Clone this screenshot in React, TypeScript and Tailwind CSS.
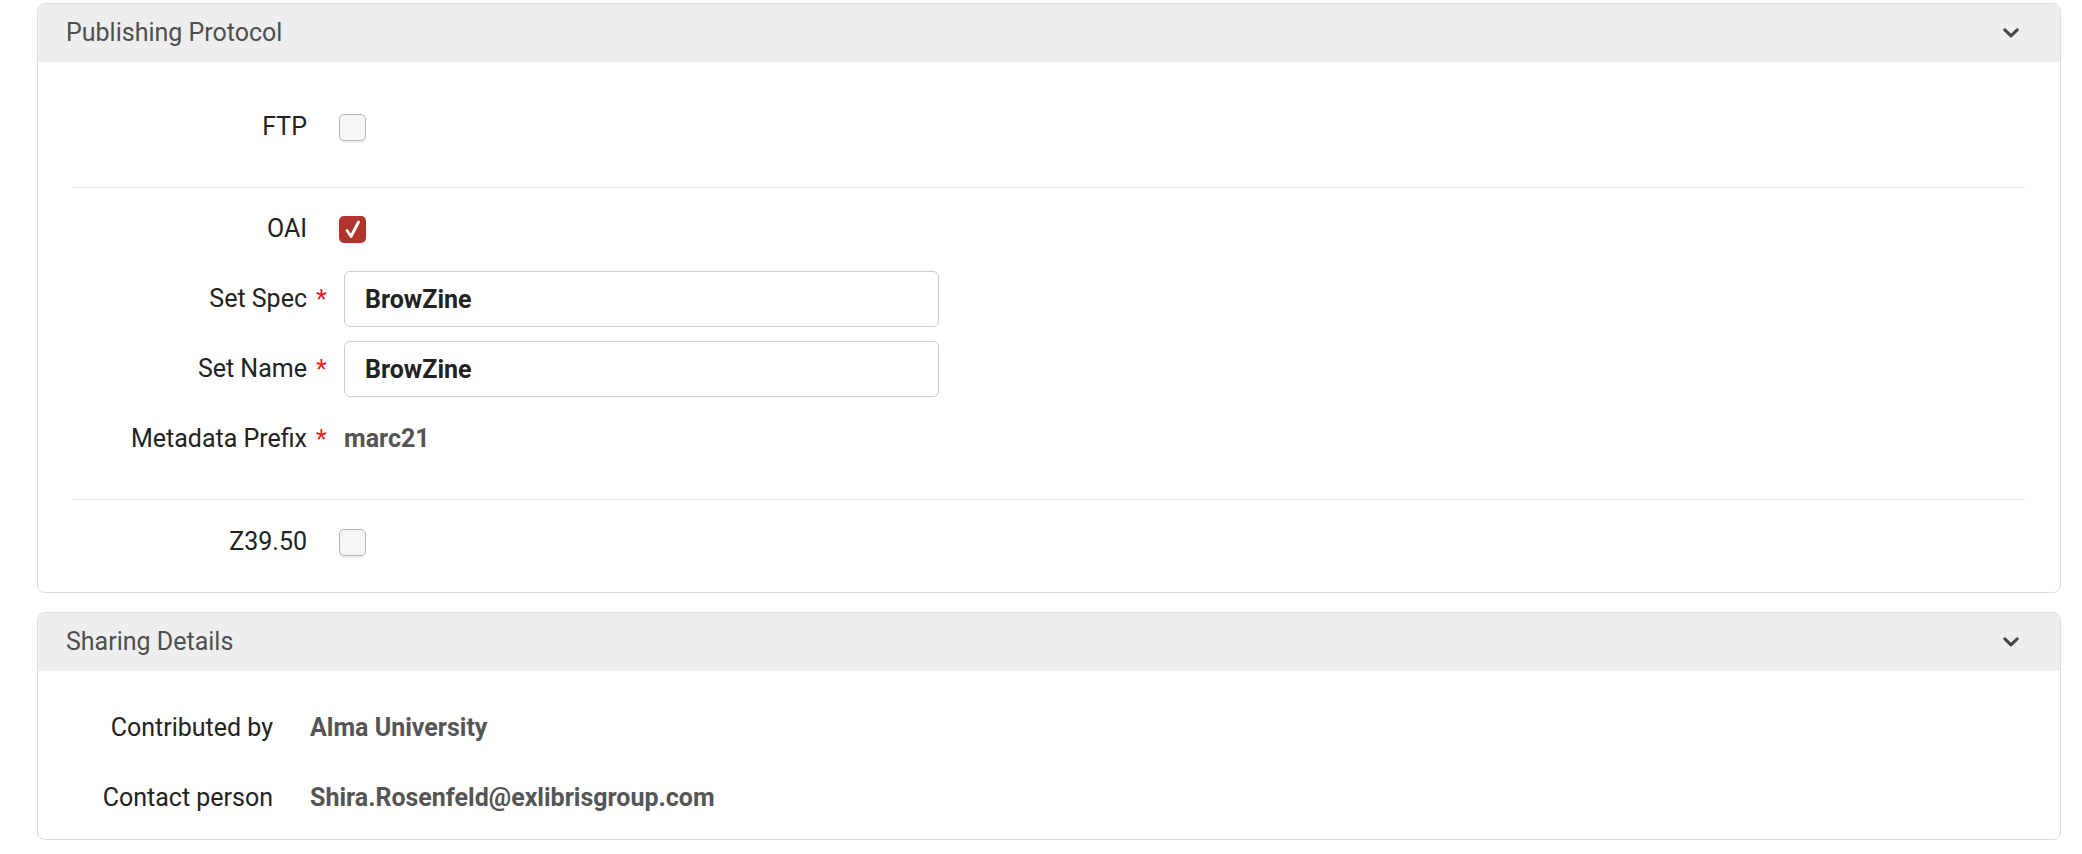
import React from "react"

const font = { fontFamily: "Roboto, 'Liberation Sans', sans-serif" }

const Chevron = () => (
  <svg width="16" height="10" viewBox="0 0 16 10" fill="none">
    <polyline points="1.8,1.8 8,7.8 14.2,1.8" stroke="#444" strokeWidth="3" strokeLinecap="round" strokeLinejoin="round" />
  </svg>
)

const Checkbox = ({ checked }: { checked?: boolean }) =>
  checked ? (
    <div className="-ml-[5px] w-[27px] h-[27px] rounded-[5px] bg-[#b3332d]">
      <svg width="27" height="27" viewBox="0 0 27 27" fill="none">
        <polyline points="8,14.5 12,20.5 19.5,6" stroke="#fff" strokeWidth="2.8" strokeLinecap="round" strokeLinejoin="round" />
      </svg>
    </div>
  ) : (
    <div className="-ml-[5px] w-[27px] h-[27px] rounded-[5px] border border-[#b5b5b5] bg-[#f6f6f6] shadow-[0_2px_1px_rgba(0,0,0,0.07)]" />
  )

const Card: React.FC<{ title: string; children: React.ReactNode }> = ({ title, children }) => (
  <div className="border border-[#dddddd] rounded-[8px] bg-white">
    <div className="h-[58px] bg-[#eeeeee] rounded-t-[7px] flex items-center justify-between pl-[28px] pr-[41px]">
      <span className="text-[25px] text-[#4f4f4f]">{title}</span>
      <Chevron />
    </div>
    {children}
  </div>
)

const ProtocolRow: React.FC<{ label: string; required?: boolean; children: React.ReactNode }> = ({
  label,
  required,
  children,
}) => (
  <div className="h-[56px] flex items-center">
    <div className="w-[234px] text-right text-[25px] text-[#222]">{label}</div>
    <div className="w-[37px] pl-[9px] text-[25px] text-[#e8231b] leading-none">{required ? "*" : ""}</div>
    {children}
  </div>
)

const TextInput = ({ value }: { value: string }) => (
  <input
    readOnly
    defaultValue={value}
    style={font}
    className="w-[595px] h-[56px] border border-[#cccccc] rounded-[6px] px-[20px] text-[25px] font-bold text-[#222] outline-none"
  />
)

const InfoRow: React.FC<{ label: string; value: string }> = ({ label, value }) => (
  <div className="h-[56px] flex items-center">
    <div className="w-[200px] text-right text-[25px] text-[#222]">{label}</div>
    <div className="ml-[37px] text-[25px] font-bold text-[#555]">{value}</div>
  </div>
)

export default function App() {
  return (
    <div style={font} className="w-[2082px] h-[854px] bg-white pt-[3px] pl-[37px] pr-[21px]">
      <Card title="Publishing Protocol">
        <div className="px-[35px]">
          <div className="pt-[37px] pb-[32px] border-b border-[#e4e4e4]">
            <ProtocolRow label="FTP">
              <Checkbox />
            </ProtocolRow>
          </div>
          <div className="pt-[13px] pb-[32px] border-b border-[#e4e4e4] flex flex-col gap-[14px]">
            <ProtocolRow label="OAI">
              <Checkbox checked />
            </ProtocolRow>
            <ProtocolRow label="Set Spec" required>
              <TextInput value="BrowZine" />
            </ProtocolRow>
            <ProtocolRow label="Set Name" required>
              <TextInput value="BrowZine" />
            </ProtocolRow>
            <ProtocolRow label="Metadata Prefix" required>
              <span className="text-[25px] font-bold text-[#555]">marc21</span>
            </ProtocolRow>
          </div>
          <div className="pt-[14px] pb-[22px]">
            <ProtocolRow label="Z39.50">
              <Checkbox />
            </ProtocolRow>
          </div>
        </div>
      </Card>
      <div className="h-[19px]" />
      <Card title="Sharing Details">
        <div className="px-[35px] pt-[29px] pb-[13px] flex flex-col gap-[14px]">
          <InfoRow label="Contributed by" value="Alma University" />
          <InfoRow label="Contact person" value="Shira.Rosenfeld@exlibrisgroup.com" />
        </div>
      </Card>
    </div>
  )
}
